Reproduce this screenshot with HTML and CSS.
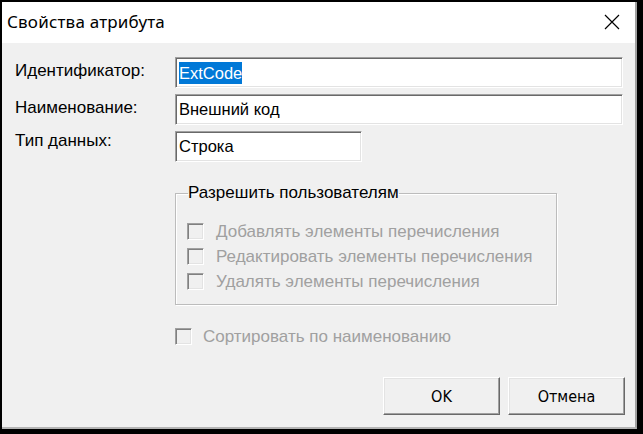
FILE: index.html
```html
<!DOCTYPE html>
<html lang="ru">
<head>
    <meta charset="UTF-8">
    <title>Свойства атрибута</title>
    <link rel="stylesheet" href="styles.css">
</head>
<body>
    <div class="window">
        <div class="titlebar">
            <span class="title">Свойства атрибута</span>
            <span class="close">
                <svg width="16" height="16" viewBox="0 0 16 16">
                    <path d="M1 1 L15 15 M15 1 L1 15" stroke="#000" stroke-width="1.2" fill="none"/>
                </svg>
            </span>
        </div>
        <div class="content">
            <div class="form">
                <div class="label">Идентификатор:</div>
                <div class="field"><span class="selected">ExtCode</span></div>
                <div class="label">Наименование:</div>
                <div class="field">Внешний код</div>
                <div class="label label-type">Тип данных:</div>
                <div class="field field-short">Строка</div>
            </div>

            <div class="options">
                <fieldset class="group">
                    <legend>Разрешить пользователям</legend>
                    <div class="check"><span class="box"></span>Добавлять элементы перечисления</div>
                    <div class="check"><span class="box"></span>Редактировать элементы перечисления</div>
                    <div class="check"><span class="box"></span>Удалять элементы перечисления</div>
                </fieldset>
                <div class="check check-sort"><span class="box"></span>Сортировать по наименованию</div>
            </div>

            <div class="buttons">
                <button class="btn">OK</button>
                <button class="btn">Отмена</button>
            </div>
        </div>
    </div>
</body>
</html>
```

FILE: styles.css
```css
body {
    margin: 0;
    background-color: #000;
    font-family: "Liberation Sans", Arial, sans-serif;
    font-size: 17px;
    color: #000;
}
.window {
    margin: 2px 0 0 2px;
    width: 635px;
    height: 427px;
    box-sizing: border-box;
    background-color: #f0f0f0;
    border-right: 2px solid #a0a0a0;
    border-bottom: 2px solid #b4b4b4;
    display: flex;
    flex-direction: column;
}
.titlebar {
    height: 41px;
    flex: 0 0 41px;
    background-color: #fff;
    display: flex;
    align-items: center;
    justify-content: space-between;
    padding: 0 15px 2px 5px;
    box-sizing: border-box;
}
.title {
    font-family: "Noto Sans", "Open Sans", sans-serif;
    font-size: 17px;
    letter-spacing: 0.2px;
}
.close {
    display: flex;
}
.content {
    flex: 1;
    display: flex;
    flex-direction: column;
    padding: 14px 12px 12px 13px;
}
.form {
    display: grid;
    grid-template-columns: 160px 1fr;
    row-gap: 6px;
}
.label {
    padding-top: 4px;
    line-height: 20px;
}
.label-type {
    padding-top: 0;
}
.field {
    height: 31px;
    box-sizing: border-box;
    background-color: #fff;
    border: 1px solid;
    border-color: #a0a0a0 #fff #fff #a0a0a0;
    box-shadow: inset 1px 1px #696969, inset -1px -1px #e3e3e3;
    padding: 4px 3px;
    font-size: 16.5px;
    line-height: 21px;
}
.field-short {
    width: 187px;
}
.selected {
    background-color: #0078d7;
    color: #fff;
    display: inline-block;
    line-height: 22px;
}

/* флажки */
.options {
    margin-left: 160px;
}
.group {
    margin: 22px 0 0 0;
    width: 382px;
    box-sizing: border-box;
    border: 1px solid #bcbcbc;
    box-shadow: inset 1px 1px #fff, 1px 1px #fff;
    padding: 17px 11px 10px 11px;
}
.group legend {
    padding: 0;
    margin-left: 1px;
    line-height: 18px;
}
.check {
    display: flex;
    align-items: center;
    height: 25px;
    color: #a0a0a0;
}
.box {
    width: 17px;
    height: 17px;
    box-sizing: border-box;
    margin-right: 12px;
    background-color: #f0f0f0;
    border: 1px solid;
    border-color: #a0a0a0 #fff #fff #a0a0a0;
    box-shadow: inset 1px 1px #808080, inset -1px -1px #e3e3e3;
}
.check-sort {
    margin-top: 19px;
}
.check-sort .box {
    margin-right: 11px;
}

.buttons {
    margin-top: auto;
    margin-right: -2px;
    display: flex;
    justify-content: flex-end;
    gap: 8px;
}
.btn {
    width: 117px;
    height: 38px;
    background-color: #f0f0f0;
    border: 1px solid;
    border-color: #fff #696969 #696969 #fff;
    box-shadow: inset -1px -1px #a0a0a0, inset 1px 1px #e3e3e3;
    font-family: "DejaVu Sans Condensed", "DejaVu Sans", sans-serif;
    font-stretch: condensed;
    font-size: 16px;
    color: #000;
    padding: 0;
}
```
